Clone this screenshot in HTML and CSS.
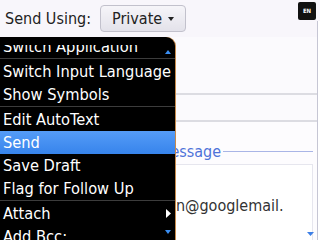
FILE: index.html
```html
<!DOCTYPE html>
<html lang = 'en'>
<head>
    <meta charset = 'UTF-8'>
    <title>Compose</title>
    <link rel="stylesheet" href="styles.css">
</head>

<body>
    <div class = 'screen'>
        <div class = 'content'>
            <div class = 'header'>
                <span class = 'label'>Send Using:</span>
                <button class = 'picker'>Private <span class = 'caret'></span></button>
                <span class = 'lang'>EN</span>
            </div>

            <div class = 'field field-to'></div>
            <div class = 'field field-subject'></div>

            <div class = 'message'>
                <div class = 'message-head'>
                    <span class = 'legend'>Message</span>
                    <span class = 'rule'></span>
                </div>
                <div class = 'message-body'>
                    <p>Hi,</p>
                    <p>john@googlemail.</p>
                </div>
            </div>
        </div>
        <div class = 'rail'></div>

        <svg class = 'page-down' width = '7' height = '4' viewBox = '0 0 7 4'>
            <path d = 'M0 0 L7 0 L3.5 4 Z' fill = '#3d7fe6'/>
        </svg>

        <div class = 'menu'>
            <svg class = 'scroll-up' width = '6' height = '4' viewBox = '0 0 6 4'>
                <path d = 'M0 4 L6 4 L3 0 Z' fill = '#3a8ef2'/>
            </svg>
            <div class = 'menu-view'>
                <div class = 'menu-items'>
                    <div class = 'item'>Switch Application</div>
                    <div class = 'sep'></div>
                    <div class = 'item'>Switch Input Language</div>
                    <div class = 'item'>Show Symbols</div>
                    <div class = 'sep'></div>
                    <div class = 'item'>Edit AutoText</div>
                    <div class = 'item active'>Send</div>
                    <div class = 'item'>Save Draft</div>
                    <div class = 'item'>Flag for Follow Up</div>
                    <div class = 'sep'></div>
                    <div class = 'item'>Attach
                        <svg class = 'sub' width = '5' height = '9' viewBox = '0 0 5 9'>
                            <path d = 'M0 0 L5 4.5 L0 9 Z' fill = '#ffffff'/>
                        </svg>
                    </div>
                    <div class = 'item'>Add Bcc:</div>
                </div>
            </div>
            <svg class = 'scroll-down' width = '6' height = '4' viewBox = '0 0 6 4'>
                <path d = 'M0 0 L6 0 L3 4 Z' fill = '#3a8ef2'/>
            </svg>
        </div>
    </div>
</body>
</html>
```

FILE: styles.css
```css
body {
    margin : 0;
    font-family : "DejaVu Sans Condensed", "DejaVu Sans", sans-serif;
    font-stretch : condensed;
    font-size : 16px;
}

.screen {
    position : relative;
    width : 320px;
    height : 240px;
    overflow : hidden;
    display : flex;
    background : #f8f6fb;
}

.content {
    width : 317px;
    display : flex;
    flex-direction : column;
}

.rail {
    width : 2px;
    margin-top : 21px;
    border-left : 1px solid #c6c6d4;
    background : #ffffff;
}

.header {
    flex-shrink : 0;
    height : 37px;
    display : flex;
    align-items : flex-start;
    padding-top : 2px;
    box-sizing : border-box;
}

.label {
    margin : 7px 0 0 5px;
    color : #222;
    line-height : 19px;
}

.picker {
    margin : 3px 0 0 9px;
    height : 27px;
    padding : 0 11px 0 11px;
    display : flex;
    align-items : center;
    gap : 6px;
    font-family : inherit;
    font-stretch : condensed;
    font-size : 16px;
    color : #222;
    background : linear-gradient(#f6f5f9, #e3e2ea);
    border : 1px solid #c2c1cc;
    border-radius : 4px;
}

.caret {
    width : 0;
    height : 0;
    border-left : 3.5px solid transparent;
    border-right : 3.5px solid transparent;
    border-top : 4px solid #222;
}

.lang {
    margin-left : auto;
    margin-right : 1px;
    width : 18px;
    height : 18px;
    background : #111;
    border-radius : 2px;
    color : white;
    font-family : "DejaVu Sans", sans-serif;
    font-size : 6px;
    font-weight : bold;
    line-height : 18px;
    text-align : center;
}

.field {
    flex-shrink : 0;
    background : #fbfafd;
    border-bottom : 2px solid #dcdce2;
}

.field-to {
    height : 56px;
}

.field-subject {
    height : 25px;
}

.message {
    flex : 1;
    min-height : 0;
    padding : 20px 4px 0 158px;
    background : #fdfcfe;
}

.message-head {
    display : flex;
    align-items : center;
    gap : 2px;
}

.legend {
    color : #4f73d9;
    line-height : 19px;
}

.rule {
    flex : 1;
    border-top : 1px solid #a9b5e6;
}

.message-body {
    margin : 3px 0 0 -8px;
    padding : 8px 0 0 3px;
    height : 80px;
    border : 1px solid #e6e6ee;
    background : #ffffff;
    color : #333;
}

.message-body p {
    margin : 0;
    line-height : 22px;
}

.page-down {
    position : absolute;
    right : 6px;
    bottom : 4px;
}

.menu {
    position : absolute;
    left : 0;
    top : 37px;
    width : 175px;
    bottom : 0;
    background : #000;
    border-top-right-radius : 9px;
    box-shadow : 1px 0 0 #c68a4c;
}

.menu-view {
    margin-top : 8px;
    height : 195px;
    overflow : hidden;
}

.menu-items {
    margin-top : -10px;
}

.item {
    height : 23px;
    line-height : 23px;
    padding-left : 3px;
    color : white;
    font-size : 16.3px;
    display : flex;
    align-items : center;
}

.item.active {
    background : linear-gradient(#559cf7, #3784ec);
}

.sep {
    height : 1px;
    margin-bottom : 1px;
    background : #3c3c3c;
}

.sub {
    margin-left : auto;
    margin-right : 4px;
}

.scroll-up {
    position : absolute;
    left : 165px;
    top : 13px;
    z-index : 1;
}

.scroll-down {
    position : absolute;
    left : 165px;
    bottom : 6px;
    z-index : 1;
}
```
